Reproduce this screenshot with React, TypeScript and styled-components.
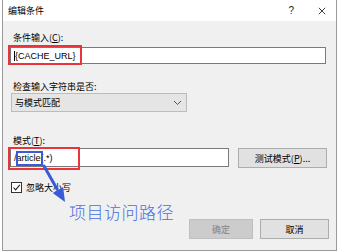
import React from 'react';
import styled, { createGlobalStyle } from 'styled-components';

const GlobalStyle = createGlobalStyle`
    html, body {
        margin: 0;
        padding: 0;
        background: #ffffff;
    }
    body {
        font-family: "Noto Sans CJK SC", "Liberation Sans", sans-serif;
        font-size: 9px;
        color: #000000;
    }
`;

const App = () => {
    return (
        <>
            <GlobalStyle />
            <DialogFrame>
                <TitleBar>
                    <TitleText>编辑条件</TitleText>
                    <TitleButtons>
                        <HelpGlyph>?</HelpGlyph>
                        <CloseIcon viewBox="0 0 10 10">
                            <path d="M1 1 L9 9 M9 1 L1 9" stroke="#111" strokeWidth="1" />
                        </CloseIcon>
                    </TitleButtons>
                </TitleBar>
                <DialogBody>
                    <FieldLabel $top={11} $bottom={3}>
                        条件输入(<u>C</u>):
                    </FieldLabel>
                    <TextBox $width={316} $height={17}>
                        <Caret />
                        {'{CACHE_URL}'}
                    </TextBox>

                    <FieldLabel $top={17} $bottom={0}>
                        检查输入字符串是否:
                    </FieldLabel>
                    <SelectBox>
                        <span>与模式匹配</span>
                        <svg width="9" height="6" viewBox="0 0 9 6">
                            <path d="M1 1 L4.5 4.5 L8 1" fill="none" stroke="#555" strokeWidth="1" />
                        </svg>
                    </SelectBox>

                    <FieldLabel $top={23} $bottom={1}>
                        模式(<u>T</u>):
                    </FieldLabel>
                    <PatternRow>
                        <TextBox $width={219} $height={19}>/article(.*)</TextBox>
                        <PushButton $width={89}>
                            测试模式(<u>P</u>)...
                        </PushButton>
                    </PatternRow>

                    <CheckRow>
                        <CheckBox>
                            <svg width="9" height="9" viewBox="0 0 9 9">
                                <path d="M1.5 4.5 L3.6 6.8 L7.8 1.8" fill="none" stroke="#222" strokeWidth="1.1" />
                            </svg>
                        </CheckBox>
                        <span>忽略大小写</span>
                    </CheckRow>

                    <ButtonRow>
                        <PushButton $width={64} $disabled>确定</PushButton>
                        <PushButton $width={69}>取消</PushButton>
                    </ButtonRow>
                </DialogBody>

                <RedMark style={{ left: 5, top: 45, width: 74, height: 20 }} />
                <RedMark style={{ left: 5, top: 147, width: 72, height: 23 }} />
                <BlueMark />
                <Arrow viewBox="0 0 35 50">
                    <path d="M9 6 L22 29" stroke="#3a5bd8" strokeWidth="3" strokeLinecap="round" />
                    <path d="M30 42 L28.1 26.9 L17.7 32.9 Z" fill="#3a5bd8" />
                </Arrow>
                <Annotation>项目访问路径</Annotation>
            </DialogFrame>
        </>
    );
};

const DialogFrame = styled.div`
    position: relative;
    box-sizing: border-box;
    margin-left: 2px;
    width: 335px;
    height: 251px;
    border: 1px solid #9a9a9a;
    border-top: none;
    background: #f0f0f0;
    display: flex;
    flex-direction: column;
`;

const TitleBar = styled.div`
    height: 21px;
    background: #ffffff;
    display: flex;
    align-items: center;
    justify-content: space-between;
    padding-left: 5px;
`;

const TitleText = styled.span`
    font-size: 9px;
    line-height: 12px;
`;

const TitleButtons = styled.div`
    display: flex;
    align-items: center;
    gap: 24px;
    padding-right: 10px;
`;

const HelpGlyph = styled.span`
    font-family: "Liberation Sans", sans-serif;
    font-size: 10px;
    color: #222;
`;

const CloseIcon = styled.svg`
    width: 8px;
    height: 8px;
`;

const DialogBody = styled.div`
    display: flex;
    flex-direction: column;
    align-items: flex-start;
    padding: 0 9px 0 7px;
`;

const FieldLabel = styled.div<{ $top: number; $bottom: number }>`
    margin: ${(p) => p.$top}px 0 ${(p) => p.$bottom}px 3px;
    line-height: 12px;
    height: 12px;
    font-size: 9px;
    white-space: nowrap;
`;

const TextBox = styled.div<{ $width: number; $height: number }>`
    box-sizing: border-box;
    width: ${(p) => p.$width}px;
    height: ${(p) => p.$height}px;
    background: #ffffff;
    border: 1px solid #7a7a7a;
    display: flex;
    align-items: center;
    padding-left: 3px;
    font-family: "Liberation Sans", "Noto Sans CJK SC", sans-serif;
    font-size: 9px;
    white-space: nowrap;
    overflow: hidden;
`;

const Caret = styled.span`
    width: 1px;
    height: 10px;
    background: #000;
`;

const SelectBox = styled.div`
    box-sizing: border-box;
    margin-left: 1px;
    width: 176px;
    height: 19px;
    background: #e5e5e5;
    border: 1px solid #bcbcbc;
    display: flex;
    align-items: center;
    justify-content: space-between;
    padding: 0 4px 0 3px;
    font-size: 9px;
`;

const PatternRow = styled.div`
    display: flex;
    gap: 9px;
`;

const PushButton = styled.div<{ $width: number; $disabled?: boolean }>`
    box-sizing: border-box;
    width: ${(p) => p.$width}px;
    height: 20px;
    display: flex;
    align-items: center;
    justify-content: center;
    background: ${(p) => (p.$disabled ? '#cccccc' : '#e1e1e1')};
    border: 1px solid ${(p) => (p.$disabled ? '#bfbfbf' : '#adadad')};
    color: ${(p) => (p.$disabled ? '#838383' : '#000000')};
    font-size: 9px;
    white-space: nowrap;
`;

const CheckRow = styled.div`
    margin: 14px 0 0 1px;
    display: flex;
    align-items: center;
    gap: 4px;
    height: 11px;
    line-height: 11px;
    font-size: 9px;
`;

const CheckBox = styled.div`
    box-sizing: border-box;
    width: 11px;
    height: 11px;
    border: 1px solid #333;
    background: #ffffff;
    display: flex;
    align-items: center;
    justify-content: center;
`;

const ButtonRow = styled.div`
    align-self: flex-end;
    margin-top: 26px;
    margin-right: -2px;
    display: flex;
    gap: 7px;
`;

const RedMark = styled.div`
    position: absolute;
    box-sizing: border-box;
    border: 2px solid #e8353b;
    pointer-events: none;
`;

const BlueMark = styled.div`
    position: absolute;
    left: 13px;
    top: 151px;
    width: 27px;
    height: 15px;
    box-sizing: border-box;
    border: 2px solid #3a5bd8;
`;

const Arrow = styled.svg`
    position: absolute;
    left: 32px;
    top: 160px;
    width: 35px;
    height: 50px;
`;

const Annotation = styled.div`
    position: absolute;
    left: 66px;
    top: 202px;
    font-family: "Noto Sans CJK SC", sans-serif;
    font-weight: 300;
    font-size: 17px;
    line-height: 20px;
    letter-spacing: 0.5px;
    color: #4a6fe0;
`;

export default App;
